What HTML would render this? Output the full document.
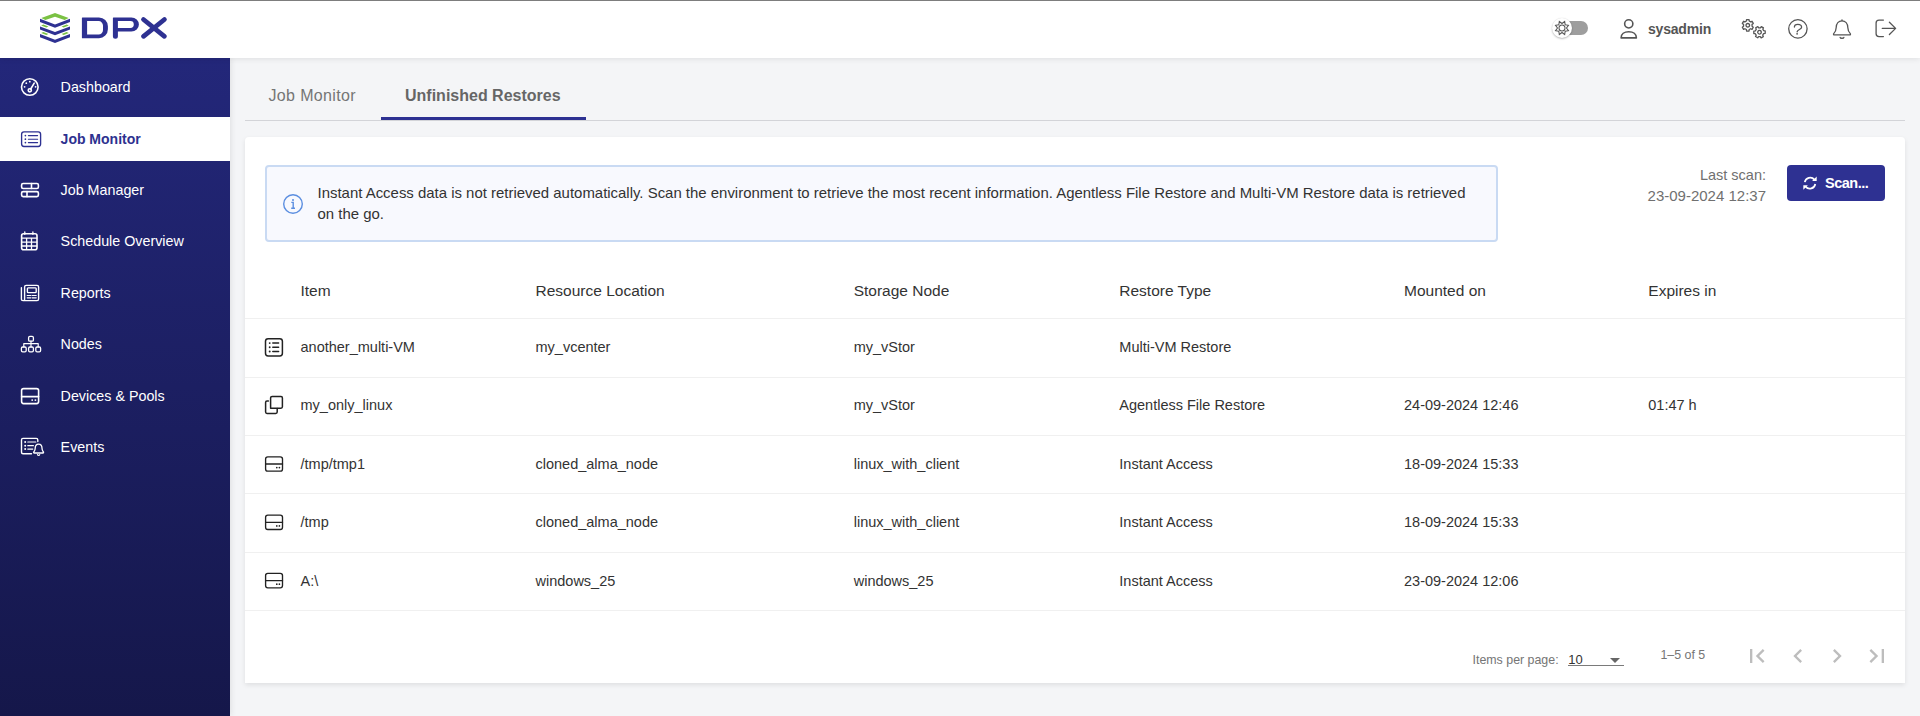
<!DOCTYPE html>
<html><head><meta charset="utf-8">
<style>
*{box-sizing:border-box;margin:0;padding:0}
html,body{width:1920px;height:716px;overflow:hidden;background:#f4f5f7;font-family:"Liberation Sans",sans-serif;color:#333}
.abs{position:absolute}
svg{position:absolute;overflow:visible}
.topline{position:absolute;left:0;top:0;width:1920px;height:1px;background:#7d7d7d;z-index:10}
.header{position:absolute;left:0;top:0;width:1920px;height:58px;background:#fff;box-shadow:0 1px 6px rgba(0,0,0,.09);z-index:5}
.sidebar{position:absolute;left:0;top:58px;width:230px;height:658px;background:linear-gradient(180deg,#23277a 0%,#15174a 100%);z-index:3;box-shadow:1px 0 6px rgba(0,0,0,.09)}
.nav{position:absolute;left:0;width:230px;height:44.5px;color:#fff;font-size:14.3px}
.nav .lb{position:absolute;left:60.6px;top:14px;white-space:nowrap;line-height:16px}
.nav.active{background:#fff;color:#2d318f;font-weight:bold}
.nav.active .lb{font-size:14px}
.main{position:absolute;left:230px;top:58px;width:1690px;height:658px}
.tab{position:absolute;top:29.2px;font-size:16px;line-height:18px;color:#757575;white-space:nowrap}
.tabline{position:absolute;left:15px;top:62px;width:1660px;height:1px;background:#d3d4d8}
.tabul{position:absolute;left:151px;top:59px;width:205px;height:3px;background:#2d3192}
.card{position:absolute;left:15px;top:79px;width:1660px;height:546px;background:#fff;border-radius:4px 4px 0 0;box-shadow:0 2px 5px rgba(0,0,0,.09)}
.info{position:absolute;left:20px;top:28px;width:1233px;height:77px;border:2px solid #c9daf3;border-radius:4px;background:#f8f9fe;font-size:14.95px;color:#333;line-height:21px}
.info .txt{position:absolute;left:50.5px;top:15px;width:1170px;white-space:nowrap}
.lastscan{position:absolute;left:0;width:1521px;top:29px;text-align:right;color:#707070;font-size:14.5px;line-height:21px}
.lastscan div{position:absolute;right:0;white-space:nowrap}
.scan{position:absolute;left:1542px;top:28px;width:98px;height:36px;background:#2e3192;border-radius:4px;color:#fff;font-weight:bold;font-size:15px}
.th{position:absolute;top:145px;font-size:15.5px;line-height:18px;color:#333;white-space:nowrap}
.rowb{position:absolute;left:0;width:1660px;height:1px;background:#f0f0f0}
.td{position:absolute;font-size:14.5px;line-height:17px;color:#333;white-space:nowrap}
.pag{position:absolute;font-size:12.4px;line-height:14px;color:#757575;white-space:nowrap}
</style></head>
<body>
<div class="topline"></div>
<div class="header">
  <!-- logo icon -->
  <svg style="left:0;top:0" width="200" height="58" viewBox="0 0 200 58">
    <polygon fill="#7ac143" points="41.3,18 55,12.9 68.7,18 64.6,20 55,16.7 45.4,20"/>
    <polygon fill="#2e3192" points="40,18.8 55,24.5 70,18.8 70,22 55,27.7 40,22"/>
    <polygon fill="#2e3192" points="40,26.4 55,32.1 70,26.4 70,29.6 55,35.3 40,29.6"/>
    <polygon fill="#2e3192" points="40,34 55,39.7 70,34 70,37.2 55,42.9 40,37.2"/>
    <polygon fill="#7ac143" points="41.2,25.5 43.3,24.5 48.4,26.5 46.3,27.4"/>
    <polygon fill="#7ac143" points="68.8,25.5 66.7,24.5 61.6,26.5 63.7,27.4"/>
    <polygon fill="#7ac143" points="41.2,33.1 43.3,32.1 48.4,34.1 46.3,35"/>
    <polygon fill="#7ac143" points="68.8,33.1 66.7,32.1 61.6,34.1 63.7,35"/>
    <path fill="#2e3192" fill-rule="evenodd" d="M82.4,17.4 H99 A8.9,8.9 0 0 1 107.9,26.3 V29.3 A8.9,8.9 0 0 1 99,38.2 H82.4 A0.5,0.5 0 0 1 81.9,37.7 V17.9 A0.5,0.5 0 0 1 82.4,17.4 Z M87.1,21.1 H98.6 A4.4,4.4 0 0 1 103,25.5 V30.1 A4.4,4.4 0 0 1 98.6,34.5 H87.1 Z"/>
    <path fill="#2e3192" fill-rule="evenodd" d="M113.4,17.4 H131.4 A7.5,7.1 0 0 1 138.9,24.5 A7.5,7.1 0 0 1 131.4,31.6 H117.9 V36.2 A2.5,2.5 0 0 1 112.9,36.2 V17.9 A0.5,0.5 0 0 1 113.4,17.4 Z M117.9,21.1 H130.4 A3.4,3.4 0 0 1 133.8,24.5 A3.4,3.4 0 0 1 130.4,27.9 H117.9 Z"/>
    <path stroke="#2e3192" stroke-width="4.8" stroke-linecap="round" fill="none" d="M143.5,19.5 L164.4,36.3 M164.4,19.5 L143.5,36.3"/>
  </svg>
  <!-- toggle -->
  <div class="abs" style="left:1553px;top:21px;width:35px;height:13.7px;border-radius:7px;background:#9e9e9e"></div>
  <div class="abs" style="left:1552px;top:18px;width:20px;height:20px;border-radius:50%;background:#fff;box-shadow:0 1px 2px rgba(0,0,0,.25),0 0 1px rgba(0,0,0,.12)"></div>
  <svg style="left:1562px;top:27.6px" width="1" height="1" viewBox="0 0 1 1">
    <path fill="none" stroke="#555" stroke-width="1.05" stroke-linejoin="miter" d="M2.68,-6.47 L3.18,-3.18 L6.47,-2.68 L4.50,0.00 L6.47,2.68 L3.18,3.18 L2.68,6.47 L0.00,4.50 L-2.68,6.47 L-3.18,3.18 L-6.47,2.68 L-4.50,0.00 L-6.47,-2.68 L-3.18,-3.18 L-2.68,-6.47 L-0.00,-4.50Z"/>
    <circle cx="0" cy="0" r="3" fill="none" stroke="#555" stroke-width="1.05"/>
  </svg>
  <!-- user -->
  <svg style="left:0;top:0" width="1920" height="58" viewBox="0 0 1920 58">
    <g fill="none" stroke="#555" stroke-width="1.6">
      <circle cx="1628.75" cy="23.85" r="4.1"/>
      <path d="M1621.1,37.9 C1621.1,34.2 1624.2,31.8 1628.75,31.8 C1633.3,31.8 1636.4,34.2 1636.4,37.9 Z" stroke-linejoin="round"/>
    </g>
    <g fill="none" stroke="#555" stroke-width="1.3">
      <g transform="translate(1747.8,25.3)"><path d="M-1.38,-4.25 L-1.24,-5.75 L1.24,-5.75 L1.38,-4.25 L2.87,-3.42 L4.24,-4.05 L5.48,-1.91 L4.25,-0.93 L4.25,0.93 L5.48,1.91 L4.24,4.05 L2.87,3.42 L1.38,4.25 L1.24,5.75 L-1.24,5.75 L-1.38,4.25 L-2.87,3.42 L-4.24,4.05 L-5.48,1.91 L-4.25,0.93 L-4.25,-0.93 L-5.48,-1.91 L-4.24,-4.05 L-2.87,-3.42Z" stroke-linejoin="round"/><circle r="1.8"/></g>
      <g transform="translate(1759.5,32.2) rotate(30)"><path d="M-1.38,-4.25 L-1.24,-5.75 L1.24,-5.75 L1.38,-4.25 L2.87,-3.42 L4.24,-4.05 L5.48,-1.91 L4.25,-0.93 L4.25,0.93 L5.48,1.91 L4.24,4.05 L2.87,3.42 L1.38,4.25 L1.24,5.75 L-1.24,5.75 L-1.38,4.25 L-2.87,3.42 L-4.24,4.05 L-5.48,1.91 L-4.25,0.93 L-4.25,-0.93 L-5.48,-1.91 L-4.24,-4.05 L-2.87,-3.42Z" stroke-linejoin="round"/><circle r="1.8"/></g>
      <circle cx="1797.9" cy="28.85" r="9.2"/>
      <path d="M1794.4,27 C1794.4,25.3 1795.9,24.3 1797.8,24.3 C1799.9,24.3 1801.6,25.4 1801.6,27.2 C1801.6,29.2 1797.2,29.8 1797.1,31.9" stroke-linecap="round"/>
    </g>
    <circle cx="1797.1" cy="33.8" r="0.9" fill="#555"/>
    <g fill="none" stroke="#555" stroke-width="1.3" stroke-linejoin="round" stroke-linecap="round">
      <path d="M1842,20.8 C1838.6,20.8 1836.3,23.5 1836.2,27.5 C1836.1,31 1834.8,32.5 1833.7,33.6 C1833.3,34.1 1833.6,34.9 1834.2,34.9 H1849.8 C1850.4,34.9 1850.7,34.1 1850.3,33.6 C1849.2,32.5 1847.9,31 1847.8,27.5 C1847.7,23.5 1845.4,20.8 1842,20.8 Z"/>
      <path d="M1842,19.8 V20.6"/>
      <path d="M1840.1,37.3 C1840.3,38.6 1843.7,38.6 1843.9,37.3"/>
      <path d="M1883.4,20.1 H1879 C1877.2,20.1 1876.1,21.2 1876.1,23 V33.8 C1876.1,35.6 1877.2,36.6 1879,36.6 H1883.4"/>
      <path d="M1882.3,28.4 H1895.6 M1889.4,22.3 L1895.6,28.4 L1889.4,34.5"/>
    </g>
  </svg>
  <div class="abs" style="left:1648px;top:21px;font-size:14px;line-height:16px;font-weight:bold;color:#555;letter-spacing:-0.2px">sysadmin</div>
</div>

<div class="sidebar">
  <svg style="left:0;top:-58px" width="230" height="716" viewBox="0 0 230 716">
    <g fill="none" stroke="#fff" stroke-width="1.6" stroke-linecap="round" stroke-linejoin="round">
      <!-- dashboard -->
      <circle cx="29.8" cy="87" r="8.3"/>
      <circle cx="29.8" cy="90.3" r="1.6"/>
      <path d="M30.7,89 L34.2,83.2"/>
      <!-- job manager -->
      <rect x="21.6" y="183.5" width="16.8" height="5" rx="1.5"/>
      <rect x="21.6" y="191.6" width="16.8" height="5" rx="1.5"/>
      <path d="M31.5,183.5 V188.5 M27,191.6 V196.6"/>
      <!-- schedule -->
      <rect x="21.6" y="233.8" width="15.4" height="15.9" rx="2"/>
      <path d="M24.8,232 V234.3 M32.9,232 V234.3 M21.8,238.1 H36.8 M21.8,242.1 H36.8 M21.8,246 H36.8 M26.6,238.1 V249.4 M31.5,238.1 V249.4" stroke-width="1.3"/>
      <!-- reports -->
      <path d="M24.4,300.6 H37 C37.8,300.6 38.6,299.8 38.6,299 V287 C38.6,286.2 37.8,285.4 37,285.4 H26.2 C25.4,285.4 24.6,286.2 24.6,287 V299.4 C24.6,300.2 23.8,300.6 23,300.6 C22.2,300.6 21.4,300 21.4,299.2 V287.6" stroke-width="1.4"/>
      <rect x="27.4" y="287.9" width="8.8" height="4.7" rx="0.8" stroke-width="1.4"/>
      <path d="M27.2,295.5 H30.8 M32.2,295.5 H36.2 M27.2,297.8 H30.8 M32.2,297.8 H36.2" stroke-width="1.2"/>
      <!-- nodes -->
      <rect x="28.6" y="336.4" width="4.8" height="4.8" rx="1.3" stroke-width="1.3"/>
      <rect x="21.4" y="347" width="4.8" height="4.8" rx="1.3" stroke-width="1.3"/>
      <rect x="28.6" y="347" width="4.8" height="4.8" rx="1.3" stroke-width="1.3"/>
      <rect x="35.8" y="347" width="4.8" height="4.8" rx="1.3" stroke-width="1.3"/>
      <path d="M31,341.2 V347 M23.8,347 V343.6 H38.2 V347" stroke-width="1.2"/>
      <!-- devices -->
      <rect x="21.6" y="388.6" width="17" height="15" rx="2"/>
      <path d="M21.6,396.6 H38.6"/>
      <!-- events -->
      <path d="M37.8,441.5 V439.9 C37.8,439 37.1,438.4 36.2,438.4 H23 C22.1,438.4 21.5,439 21.5,439.9 V452.2 C21.5,453.1 22.1,453.7 23,453.7 H31.5" stroke-width="1.4"/>
      <path d="M27.8,442 H35.8 M27.8,445.7 H33.4 M27.8,449.1 H32.8" stroke-width="1.2"/>
      <path d="M38.6,444.1 C36.4,444.1 35.2,446 35.2,448.3 C35.2,450.4 34.4,451.3 33.8,452 C33.5,452.4 33.7,453 34.2,453 H43 C43.5,453 43.7,452.4 43.4,452 C42.8,451.3 42,450.4 42,448.3 C42,446 40.8,444.1 38.6,444.1 Z" stroke-width="1.3"/>
      <path d="M37.5,454.6 C37.8,455.6 39.4,455.6 39.7,454.6" stroke-width="1.2"/>
    </g>
    <g fill="#fff">
      <circle cx="24.6" cy="86.8" r="0.9"/><circle cx="26.3" cy="83.2" r="0.9"/><circle cx="29.8" cy="81.7" r="0.9"/><circle cx="35.6" cy="86.8" r="0.9"/>
      <circle cx="32.2" cy="400.1" r="0.95"/><circle cx="35.4" cy="400.1" r="0.95"/>
      <circle cx="25.2" cy="442" r="1"/><circle cx="25.2" cy="445.7" r="1"/><circle cx="25.2" cy="449.1" r="1"/>
    </g>
  </svg>
  <div class="nav" style="top:7.2px"><span class="lb">Dashboard</span></div>
  <div class="nav active" style="top:58.5px">
    <svg style="left:0;top:-116.5px" width="60" height="200" viewBox="0 0 60 200">
      <rect x="21.6" y="131.9" width="19" height="14.6" rx="2.4" fill="none" stroke="#2d3192" stroke-width="1.35"/>
      <path d="M28.4,135.6 H37.6 M28.4,139.2 H37.6 M28.4,142.6 H37.6" stroke="#2d3192" stroke-width="1.15" stroke-linecap="round"/>
      <g fill="#2d3192"><circle cx="25.4" cy="135.6" r="0.85"/><circle cx="25.4" cy="139.2" r="0.85"/><circle cx="25.4" cy="142.6" r="0.85"/></g>
    </svg>
    <span class="lb">Job Monitor</span></div>
  <div class="nav" style="top:109.9px"><span class="lb">Job Manager</span></div>
  <div class="nav" style="top:161.3px"><span class="lb">Schedule Overview</span></div>
  <div class="nav" style="top:212.7px"><span class="lb">Reports</span></div>
  <div class="nav" style="top:264.1px"><span class="lb">Nodes</span></div>
  <div class="nav" style="top:315.5px"><span class="lb">Devices &amp; Pools</span></div>
  <div class="nav" style="top:366.9px"><span class="lb">Events</span></div>
</div>

<div class="main">
  <div class="tab" style="left:38.5px;letter-spacing:0.35px">Job Monitor</div>
  <div class="tab" style="left:175px;font-weight:bold;color:#666">Unfinished Restores</div>
  <div class="tabline"></div>
  <div class="tabul"></div>
  <div class="card">
    <div class="info">
      <svg style="left:14.9px;top:26px" width="22" height="22" viewBox="0 0 22 22">
        <circle cx="11" cy="11" r="9.3" fill="none" stroke="#5b8ee0" stroke-width="1.4"/>
        <circle cx="11" cy="6.9" r="1" fill="#5b8ee0"/>
        <path d="M9.3,9.4 H11.2 V15 M9.2,15.2 H13" fill="none" stroke="#5b8ee0" stroke-width="1.4"/>
      </svg>
      <div class="txt">Instant Access data is not retrieved automatically. Scan the environment to retrieve the most recent information. Agentless File Restore and Multi-VM Restore data is retrieved<br>on the go.</div>
    </div>
    <div class="lastscan"><div style="top:-0.7px">Last scan:</div><div style="top:19px;font-size:15px">23-09-2024 12:37</div></div>
    <div class="scan">
      <svg style="left:0;top:0" width="98" height="36" viewBox="1787 165 98 36">
        <g fill="none" stroke="#fff" stroke-width="1.7" stroke-linecap="butt">
          <path d="M1804.8,182.2 A5.5,5.5 0 0 1 1814.4,179.6"/>
          <path d="M1815.3,184.0 A5.5,5.5 0 0 1 1805.6,186.6"/>
        </g>
        <g fill="#fff">
          <polygon points="1812.1,181 1816.7,181 1816.7,176.4"/>
          <polygon points="1807.9,185.2 1803.3,185.2 1803.3,189.8"/>
        </g>
      </svg>
      <div class="abs" style="left:38px;top:10px;line-height:17px;white-space:nowrap;font-size:14.5px;letter-spacing:-0.5px">Scan...</div>
    </div>
    <div class="th" style="left:55.5px">Item</div>
    <div class="th" style="left:290.5px">Resource Location</div>
    <div class="th" style="left:608.7px">Storage Node</div>
    <div class="th" style="left:874.3px">Restore Type</div>
    <div class="th" style="left:1159px">Mounted on</div>
    <div class="th" style="left:1403.3px">Expires in</div>
    <div class="rowb" style="top:181.2px"></div>
    <div class="rowb" style="top:239.6px"></div>
    <div class="rowb" style="top:298px"></div>
    <div class="rowb" style="top:356.4px"></div>
    <div class="rowb" style="top:414.8px"></div>
    <div class="rowb" style="top:473.2px"></div>
    <!-- rows -->
    <svg style="left:0;top:0" width="60" height="546" viewBox="245 137 60 546">
      <g fill="none" stroke="#222" stroke-width="1.5" stroke-linejoin="round" stroke-linecap="round">
        <rect x="265.5" y="338.7" width="16.9" height="17.2" rx="2.6"/>
        <path d="M272.8,343.1 H278.6 M272.8,347.3 H278.6 M272.8,351.5 H278.6"/>
        <path d="M270.6,400.3 V397.8 C270.6,396.9 271.3,396.5 272.1,396.5 H281 C281.8,396.5 282.4,397.1 282.4,397.9 V406.8 C282.4,407.6 281.8,408.2 281,408.2 H270.6 V400.3"/>
        <path d="M268.4,401 H267 C266.2,401 265.6,401.6 265.6,402.4 V412 C265.6,412.8 266.2,413.4 267,413.4 H275.7 C276.5,413.4 277.2,412.8 277.2,412 V408.4"/>
        <g stroke-width="1.35">
        <rect x="265.6" y="456.8" width="16.9" height="14.4" rx="2.2"/>
        <path d="M265.6,464 H282.5"/>
        <rect x="265.6" y="515.1" width="16.9" height="14.4" rx="2.2"/>
        <path d="M265.6,522.3 H282.5"/>
        <rect x="265.6" y="573.4" width="16.9" height="14.4" rx="2.2"/>
        <path d="M265.6,580.6 H282.5"/>
        </g>
      </g>
      <g fill="#222">
        <circle cx="269.7" cy="343.1" r="0.95"/><circle cx="269.7" cy="347.3" r="0.95"/><circle cx="269.7" cy="351.5" r="0.95"/>
        <circle cx="276.8" cy="467.6" r="0.85"/><circle cx="279.4" cy="467.6" r="0.85"/>
        <circle cx="276.8" cy="525.9" r="0.85"/><circle cx="279.4" cy="525.9" r="0.85"/>
        <circle cx="276.8" cy="584.2" r="0.85"/><circle cx="279.4" cy="584.2" r="0.85"/>
      </g>
    </svg>
    <div class="td" style="left:55.5px;top:202px">another_multi-VM</div>
    <div class="td" style="left:290.5px;top:202px">my_vcenter</div>
    <div class="td" style="left:608.7px;top:202px">my_vStor</div>
    <div class="td" style="left:874.3px;top:202px">Multi-VM Restore</div>

    <div class="td" style="left:55.5px;top:260.4px">my_only_linux</div>
    <div class="td" style="left:608.7px;top:260.4px">my_vStor</div>
    <div class="td" style="left:874.3px;top:260.4px">Agentless File Restore</div>
    <div class="td" style="left:1159px;top:260.4px">24-09-2024 12:46</div>
    <div class="td" style="left:1403.3px;top:260.4px">01:47 h</div>

    <div class="td" style="left:55.5px;top:318.8px">/tmp/tmp1</div>
    <div class="td" style="left:290.5px;top:318.8px">cloned_alma_node</div>
    <div class="td" style="left:608.7px;top:318.8px">linux_with_client</div>
    <div class="td" style="left:874.3px;top:318.8px">Instant Access</div>
    <div class="td" style="left:1159px;top:318.8px">18-09-2024 15:33</div>

    <div class="td" style="left:55.5px;top:377.2px">/tmp</div>
    <div class="td" style="left:290.5px;top:377.2px">cloned_alma_node</div>
    <div class="td" style="left:608.7px;top:377.2px">linux_with_client</div>
    <div class="td" style="left:874.3px;top:377.2px">Instant Access</div>
    <div class="td" style="left:1159px;top:377.2px">18-09-2024 15:33</div>

    <div class="td" style="left:55.5px;top:435.6px">A:\</div>
    <div class="td" style="left:290.5px;top:435.6px">windows_25</div>
    <div class="td" style="left:608.7px;top:435.6px">windows_25</div>
    <div class="td" style="left:874.3px;top:435.6px">Instant Access</div>
    <div class="td" style="left:1159px;top:435.6px">23-09-2024 12:06</div>

    <!-- pagination -->
    <div class="pag" style="left:1227.5px;top:515.5px">Items per page:</div>
    <div class="pag" style="left:1323.3px;top:515.5px;color:#333;font-size:13px">10</div>
    <div class="abs" style="left:1323px;top:527.5px;width:55.8px;height:1px;background:#7a7a7a"></div>
    <svg style="left:1365px;top:520.8px" width="10" height="6" viewBox="0 0 10 6"><path d="M0,0 H10 L5,5.1Z" fill="#666"/></svg>
    <div class="pag" style="left:1415.4px;top:510.5px">1&#8211;5 of 5</div>
    <svg style="left:1497.8px;top:504.8px" width="28" height="28" viewBox="0 0 24 24"><path fill="#bdbdbd" d="M18.41 16.59L13.82 12l4.59-4.59L17 6l-6 6 6 6zM6 6h2v12H6z"/></svg>
    <svg style="left:1538.6px;top:504.8px" width="28" height="28" viewBox="0 0 24 24"><path fill="#bdbdbd" d="M15.41 7.41L14 6l-6 6 6 6 1.41-1.41L10.83 12z"/></svg>
    <svg style="left:1578px;top:504.8px" width="28" height="28" viewBox="0 0 24 24"><path fill="#bdbdbd" d="M10 6L8.59 7.41 13.17 12l-4.58 4.59L10 18l6-6z"/></svg>
    <svg style="left:1618.1px;top:504.8px" width="28" height="28" viewBox="0 0 24 24"><path fill="#bdbdbd" d="M5.59 7.41L10.18 12l-4.59 4.59L7 18l6-6-6-6zM16 6h2v12h-2z"/></svg>
  </div>
</div>
</body></html>
